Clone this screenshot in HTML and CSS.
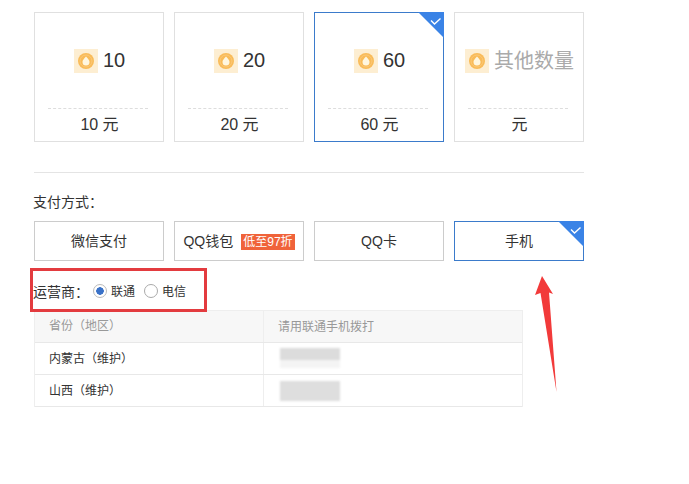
FILE: index.html
```html
<!DOCTYPE html>
<html lang="zh">
<head>
<meta charset="utf-8">
<title>支付</title>
<link rel="stylesheet" href="styles.css">
</head>
<body>
<main class="page">
  <section class="cards">
    <div class="card">
      <div class="amount"><svg class="coin" viewBox="0 0 24 24"><rect width="24" height="24" fill="#fdeed2"/><circle cx="12" cy="12" r="8" fill="#f9bb58"/><circle cx="12" cy="12" r="6" fill="none" stroke="#fbc878" stroke-width="1"/><path d="M12 7.500C14.500 10 15.500 11.500 15.500 13A3.500 3.500 0 0 1 8.500 13C8.500 11.500 9.500 10 12 7.500Z" fill="#fff6df"/></svg><span class="num">10</span></div>
      <div class="price">10 元</div>
    </div>
    <div class="card">
      <div class="amount"><svg class="coin" viewBox="0 0 24 24"><rect width="24" height="24" fill="#fdeed2"/><circle cx="12" cy="12" r="8" fill="#f9bb58"/><circle cx="12" cy="12" r="6" fill="none" stroke="#fbc878" stroke-width="1"/><path d="M12 7.500C14.500 10 15.500 11.500 15.500 13A3.500 3.500 0 0 1 8.500 13C8.500 11.500 9.500 10 12 7.500Z" fill="#fff6df"/></svg><span class="num">20</span></div>
      <div class="price">20 元</div>
    </div>
    <div class="card selected">
      <svg class="tick" viewBox="0 0 26 26"><path d="M0 0H26V26Z" fill="#3a83e6"/><path d="M13 8.500L16.500 12L22.500 6.500" fill="none" stroke="#fff" stroke-width="1.400"/></svg>
      <div class="amount"><svg class="coin" viewBox="0 0 24 24"><rect width="24" height="24" fill="#fdeed2"/><circle cx="12" cy="12" r="8" fill="#f9bb58"/><circle cx="12" cy="12" r="6" fill="none" stroke="#fbc878" stroke-width="1"/><path d="M12 7.500C14.500 10 15.500 11.500 15.500 13A3.500 3.500 0 0 1 8.500 13C8.500 11.500 9.500 10 12 7.500Z" fill="#fff6df"/></svg><span class="num">60</span></div>
      <div class="price">60 元</div>
    </div>
    <div class="card">
      <div class="amount"><svg class="coin" viewBox="0 0 24 24"><rect width="24" height="24" fill="#fdeed2"/><circle cx="12" cy="12" r="8" fill="#f9bb58"/><circle cx="12" cy="12" r="6" fill="none" stroke="#fbc878" stroke-width="1"/><path d="M12 7.500C14.500 10 15.500 11.500 15.500 13A3.500 3.500 0 0 1 8.500 13C8.500 11.500 9.500 10 12 7.500Z" fill="#fff6df"/></svg><span class="other">其他数量</span></div>
      <div class="price">元</div>
    </div>
  </section>

  <hr class="divider">

  <div class="pay-label">支付方式：</div>
  <section class="methods">
    <div class="method">微信支付</div>
    <div class="method">QQ钱包<span class="badge">低至97折</span></div>
    <div class="method">QQ卡</div>
    <div class="method selected">手机<svg class="tick" viewBox="0 0 26 26"><path d="M0 0H26V26Z" fill="#3a83e6"/><path d="M13 8.500L16.500 12L22.500 6.500" fill="none" stroke="#fff" stroke-width="1.400"/></svg></div>
  </section>

  <div class="carrier">
    <span class="carrier-label">运营商：</span>
    <span class="radio on"></span><span class="radio-text">联通</span>
    <span class="radio"></span><span class="radio-text">电信</span>
  </div>

  <section class="table">
    <div class="row head"><div class="col-a">省份（地区）</div><div class="col-b">请用联通手机拨打</div></div>
    <div class="row"><div class="col-a">内蒙古（维护）</div><div class="col-b"><span class="blur blur-a"></span></div></div>
    <div class="row"><div class="col-a">山西（维护）</div><div class="col-b"><span class="blur blur-b"></span></div></div>
  </section>

  <svg class="arrow" viewBox="0 0 40 130"><path d="M8 0L1 19L6.500 17L22.500 116L15 16.500L19 18Z" fill="#f23a3a"/></svg>
</main>
</body>
</html>
```
FILE: styles.css
```css
* { box-sizing: border-box; }
html, body { margin: 0; background: #fff; }
body {
  font-family: "Liberation Sans", "Noto Sans CJK SC", sans-serif;
  color: #333;
  font-size: 14px;
}
.page {
  position: relative;
  width: 689px;
  height: 484px;
  overflow: hidden;
  padding: 12px 0 0 34px;
}
.cards { display: flex; gap: 10px; width: 550px; }
.card {
  position: relative;
  width: 130px;
  height: 130px;
  border: 1px solid #e0e0e0;
  padding: 36px 15px 0 13px;
  display: flex;
  flex-direction: column;
}
.card.selected, .method.selected { border-color: #3b7bcb; }
.amount {
  height: 24px;
  padding-left: 3px;
  display: flex;
  align-items: center;
  justify-content: center;
  gap: 5px;
  font-size: 20px;
  line-height: 22px;
  color: #333;
  white-space: nowrap;
}
.coin { width: 24px; height: 24px; flex: none; }
.num { padding-bottom: 2px; }
.other { font-size: 20px; color: #aaa; }
.price {
  margin-top: 35px;
  padding-left: 3px;
  border-top: 1px dashed #ddd;
  height: 32px;
  line-height: 31px;
  text-align: center;
  font-size: 16px;
}
.tick { position: absolute; top: -1px; right: -1px; width: 26px; height: 26px; }
.divider { width: 550px; height: 1px; margin: 30px 0 0; border: 0; background: #e4e4e4; }
.pay-label { margin-top: 20px; height: 18px; line-height: 18px; margin-left: -1px; }
.methods { display: flex; gap: 10px; width: 550px; margin-top: 10px; }
.method {
  position: relative;
  width: 130px;
  height: 40px;
  border: 1px solid #ccc;
  display: flex;
  align-items: center;
  justify-content: center;
  padding-bottom: 2px;
  white-space: nowrap;
}
.badge {
  margin: 4px 0 0 8px;
  padding: 0 2px;
  height: 16px;
  line-height: 16px;
  font-size: 12px;
  color: #fff;
  background: #f0633a;
}
.carrier {
  position: relative;
  width: 177px;
  height: 44px;
  margin: 7px 0 0 -4px;
  border: 3px solid #e33b3f;
  display: flex;
  align-items: center;
  padding: 1px 0 0;
}
.carrier-label { width: 60px; flex: none; }
.radio {
  width: 14px;
  height: 14px;
  border: 1px solid #aaa;
  border-radius: 50%;
  flex: none;
  background: #fff;
  margin-right: 4px;
}
.radio.on { border-color: #bbb; background: radial-gradient(circle, #3a72c8 0 3.500px, #fff 4px); }
.radio-text { font-size: 12px; margin-right: 9px; }
.table {
  width: 489px;
  margin-top: -2px;
  border: 1px solid #eee;
  border-width: 1px 1px 0 1px;
  font-size: 12px;
}
.row { display: flex; height: 32px; border-bottom: 1px solid #e8e8e8; align-items: stretch; }
.head { background: #f7f7f7; color: #999; }
.col-a { width: 229px; padding-left: 14px; line-height: 32px; border-right: 1px solid #eee; }
.head .col-a { line-height: 30px; }
.col-b { flex: 1; padding-left: 14px; line-height: 30px; display: flex; align-items: center; }
.blur { display: block; width: 60px; margin-left: 2px; filter: blur(1px); }
.blur-a { height: 20px; background: linear-gradient(180deg, #dcdcdc 0 12px, #f4f4f4 12px); margin-top: -1px; }
.blur-b { height: 20px; background: #dedede; }
.arrow { position: absolute; left: 534px; top: 276px; width: 40px; height: 130px; }
```
